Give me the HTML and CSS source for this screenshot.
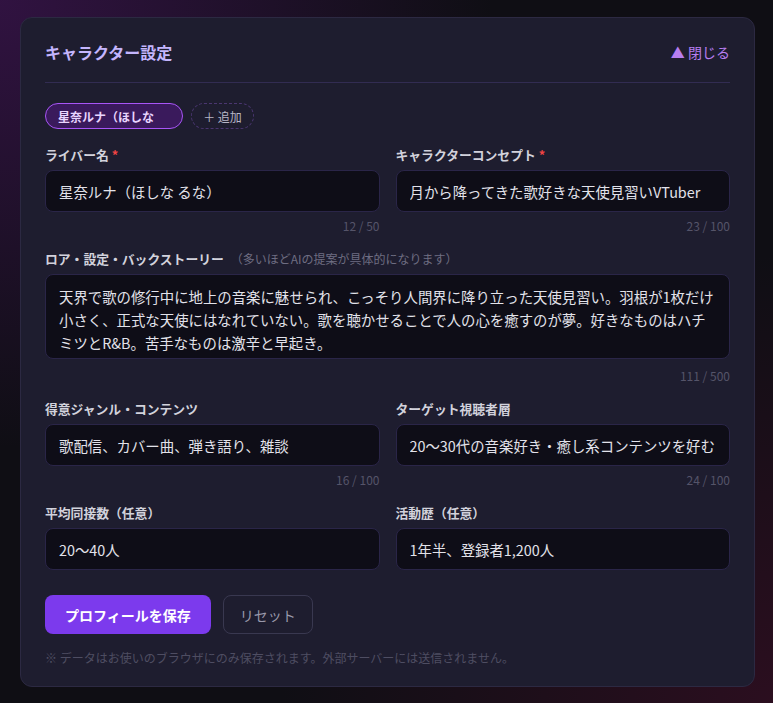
FILE: index.html
```html
<!DOCTYPE html>
<html lang="ja">
<head>
    <meta charset="UTF-8" />
    <meta name="viewport" content="width=device-width, initial-scale=1.0" />
    <title>キャラクター設定</title>
    <link rel="stylesheet" href="styles.css">
</head>
<body>
    <section class="panel">
        <header class="panel-head">
            <h2 class="panel-title">キャラクター設定</h2>
            <button class="close-btn">▲ 閉じる</button>
        </header>

        <div class="profile-tabs">
            <button class="tab active">星奈ルナ（ほしな</button>
            <button class="tab add">＋ 追加</button>
        </div>

        <div class="form-grid">
            <div class="field">
                <label class="field-label">ライバー名 <span class="req">*</span></label>
                <input class="text-input" type="text" value="星奈ルナ（ほしな るな）">
                <div class="counter">12 / 50</div>
            </div>
            <div class="field">
                <label class="field-label">キャラクターコンセプト <span class="req">*</span></label>
                <input class="text-input" type="text" value="月から降ってきた歌好きな天使見習いVTuber">
                <div class="counter">23 / 100</div>
            </div>
            <div class="field wide">
                <label class="field-label">ロア・設定・バックストーリー <span class="hint">（多いほどAIの提案が具体的になります）</span></label>
                <textarea class="text-input area">天界で歌の修行中に地上の音楽に魅せられ、こっそり人間界に降り立った天使見習い。羽根が1枚だけ小さく、正式な天使にはなれていない。歌を聴かせることで人の心を癒すのが夢。好きなものはハチミツとR&amp;B。苦手なものは激辛と早起き。</textarea>
                <div class="counter">111 / 500</div>
            </div>
            <div class="field">
                <label class="field-label">得意ジャンル・コンテンツ</label>
                <input class="text-input" type="text" value="歌配信、カバー曲、弾き語り、雑談">
                <div class="counter">16 / 100</div>
            </div>
            <div class="field">
                <label class="field-label">ターゲット視聴者層</label>
                <input class="text-input" type="text" value="20〜30代の音楽好き・癒し系コンテンツを好む">
                <div class="counter">24 / 100</div>
            </div>
            <div class="field">
                <label class="field-label">平均同接数（任意）</label>
                <input class="text-input" type="text" value="20〜40人">
            </div>
            <div class="field">
                <label class="field-label">活動歴（任意）</label>
                <input class="text-input" type="text" value="1年半、登録者1,200人">
            </div>
        </div>

        <div class="actions">
            <button class="save-btn">プロフィールを保存</button>
            <button class="reset-btn">リセット</button>
        </div>
        <p class="note">※ データはお使いのブラウザにのみ保存されます。外部サーバーには送信されません。</p>
    </section>
</body>
</html>
```

FILE: styles.css
```css
* {
    box-sizing: border-box;
}

body {
    margin: 0;
    min-height: 703px;
    font-family: 'Noto Sans CJK JP', 'Noto Sans', sans-serif;
    background-color: #0f0e14;
    background-image:
        radial-gradient(ellipse at 0% 0%, rgba(60, 20, 80, 0.75), transparent 45%),
        radial-gradient(ellipse at 100% 100%, rgba(50, 14, 34, 0.8), transparent 45%);
    padding-top: 17px;
}

.panel {
    width: 735px;
    margin-left: 20px;
    background-color: #1e1d2f;
    border: 1px solid #2c2942;
    border-radius: 12px;
    padding: 24px 24px 20px;
}

.panel-head {
    display: flex;
    justify-content: space-between;
    align-items: center;
    padding-bottom: 20px;
    border-bottom: 1px solid #322c52;
}

.panel-title {
    margin: 0;
    font-size: 16px;
    line-height: 20px;
    font-weight: 700;
    color: #c4b5fd;
}

.close-btn {
    background: none;
    border: none;
    padding: 0;
    font-family: inherit;
    font-size: 14px;
    line-height: 20px;
    color: #b77ef0;
    cursor: pointer;
}

.profile-tabs {
    display: flex;
    gap: 8px;
    margin-top: 20px;
}

.tab {
    height: 26px;
    border-radius: 13px;
    font-family: inherit;
    font-size: 12px;
    cursor: pointer;
}

.tab.active {
    width: 138px;
    text-align: left;
    padding: 0 12px;
    background-color: #3a1a5c;
    border: 1.5px solid #a855f7;
    color: #e9d5ff;
    font-weight: 700;
}

.tab.add {
    width: 63px;
    padding: 0;
    background: transparent;
    border: 1px dashed #4a3670;
    color: #b8b6c6;
}

.form-grid {
    display: grid;
    grid-template-columns: 1fr 1fr;
    column-gap: 16px;
    row-gap: 16px;
    margin-top: 17px;
}

.field.wide {
    grid-column: 1 / -1;
}

.field-label {
    display: block;
    font-size: 12.8px;
    line-height: 18px;
    font-weight: 700;
    color: #d2d2dc;
    margin-bottom: 6px;
}

.req {
    color: #ef4444;
}

.hint {
    font-weight: 400;
    font-size: 12px;
    color: #6e6d82;
    margin-left: 4px;
}

.text-input {
    display: block;
    width: 100%;
    height: 42px;
    padding: 0 13px;
    background-color: #0e0d17;
    border: 1px solid #2a2548;
    border-radius: 8px;
    color: #e2e2ea;
    font-family: inherit;
    font-size: 14.4px;
    outline: none;
}

.text-input.area {
    height: 85px;
    padding: 10px 13px 0;
    line-height: 23px;
    resize: none;
    overflow: hidden;
    margin-bottom: 9px;
}

.counter {
    margin-top: 6px;
    text-align: right;
    font-size: 12px;
    line-height: 16px;
    color: #555469;
}

.actions {
    display: flex;
    gap: 12px;
    margin-top: 25px;
}

.save-btn {
    height: 39px;
    padding: 0 20px;
    background-color: #7c3aed;
    border: none;
    border-radius: 8px;
    color: #fff;
    font-family: inherit;
    font-size: 14px;
    font-weight: 700;
    cursor: pointer;
}

.reset-btn {
    height: 39px;
    width: 90px;
    background: transparent;
    border: 1px solid #393850;
    border-radius: 8px;
    color: #9a99ab;
    font-family: inherit;
    font-size: 14px;
    cursor: pointer;
}

.note {
    margin: 16px 0 0;
    font-size: 12px;
    line-height: 16px;
    color: #4e4d62;
}
```
